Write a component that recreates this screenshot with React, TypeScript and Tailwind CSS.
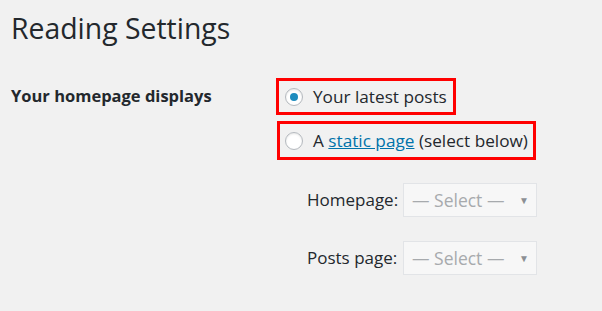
export default function App() {
  return (
    <div className="w-[602px] h-[311px] bg-[#f1f1f1] overflow-hidden text-[#23282d] font-['Open_Sans','Noto_Sans',sans-serif]">
      <h1 className="pl-[11px] pt-[10px] text-[28.4px] leading-[36px] font-normal">Reading Settings</h1>

      <div className="flex mt-[32px]">
        <div className="w-[276px] pl-[11px] pt-[7px] text-[16.5px] leading-[22px] font-bold">Your homepage displays</div>

        <div className="flex flex-col">
          <label className="self-start flex items-center h-[37px] pl-[6px] pr-[6px] border-[3px] border-[#ff0000]">
            <span className="w-[18px] h-[18px] rounded-full border border-[#b4b9be] bg-white flex items-center justify-center shadow-[inset_0_1px_2px_rgba(0,0,0,0.1)]">
              <span className="w-[8px] h-[8px] rounded-full bg-[#1e8cbe]" />
            </span>
            <span className="ml-[10px] text-[17.2px] leading-[22px]">Your latest posts</span>
          </label>

          <label className="self-start flex items-center h-[39px] mt-[6px] ml-[1px] pl-[5px] pr-[5px] border-[3px] border-[#ff0000]">
            <span className="w-[18px] h-[18px] rounded-full border border-[#b4b9be] bg-white shadow-[inset_0_1px_2px_rgba(0,0,0,0.1)]" />
            <span className="ml-[10px] text-[17.2px] leading-[22px]">
              A <a className="text-[#0073aa] underline">static page</a> (select below)
            </span>
          </label>

          <div className="flex flex-col gap-[24px] mt-[23px] ml-[31px]">
            <div className="flex items-center">
              <span className="w-[96px] text-[17px] leading-[22px]">Homepage:</span>
              <div className="w-[134px] h-[34px] flex items-center justify-between pl-[8px] pr-[7px] bg-[#f7f7f7] border border-[#e2e4e7] text-[#a7aaad] text-[17.5px]">
                <span>— Select —</span>
                <span className="text-[10px] text-[#8c8f94]">▼</span>
              </div>
            </div>
            <div className="flex items-center">
              <span className="w-[96px] text-[17px] leading-[22px]">Posts page:</span>
              <div className="w-[134px] h-[34px] flex items-center justify-between pl-[8px] pr-[7px] bg-[#f7f7f7] border border-[#e2e4e7] text-[#a7aaad] text-[17.5px]">
                <span>— Select —</span>
                <span className="text-[10px] text-[#8c8f94]">▼</span>
              </div>
            </div>
          </div>
        </div>
      </div>
    </div>
  );
}
